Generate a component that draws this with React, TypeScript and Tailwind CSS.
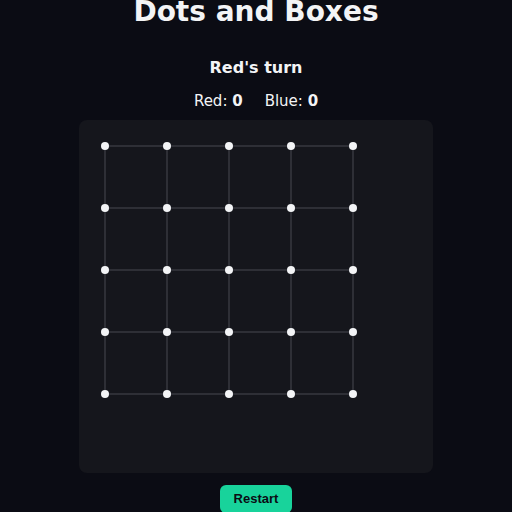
const SIZE = 5;
const GAP = 62;
const OFFSET = 26;

export default function App() {
  const dots = [];
  const lines = [];
  for (let r = 0; r < SIZE; r++) {
    for (let c = 0; c < SIZE; c++) {
      const x = OFFSET + c * GAP;
      const y = OFFSET + r * GAP;
      if (c < SIZE - 1) {
        lines.push(<line key={`h-${r}-${c}`} x1={x} y1={y} x2={x + GAP} y2={y} stroke="#2e2f36" strokeWidth={2} />);
      }
      if (r < SIZE - 1) {
        lines.push(<line key={`v-${r}-${c}`} x1={x} y1={y} x2={x} y2={y + GAP} stroke="#2e2f36" strokeWidth={2} />);
      }
      dots.push(<circle key={`d-${r}-${c}`} cx={x} cy={y} r={4} fill="#f3f4f6" />);
    }
  }

  return (
    <div className="min-h-screen bg-[#0b0c14] text-[#f3f4f6] flex flex-col items-center overflow-hidden font-['DejaVu_Sans',sans-serif]">
      <h1 className="text-[28px] font-bold leading-none -mt-[2px]">Dots and Boxes</h1>
      <div className="mt-[32px] text-[16px] font-bold leading-5">Red's turn</div>
      <div className="mt-[13px] flex gap-[22px] text-[15px] leading-5">
        <span>Red: <b>0</b></span>
        <span>Blue: <b>0</b></span>
      </div>
      <div className="mt-[9px] w-[354px] h-[353px] bg-[#15161c] rounded-lg">
        <svg width={354} height={353}>
          {lines}
          {dots}
        </svg>
      </div>
      <button className="mt-[12px] w-[72px] h-[28px] rounded-md bg-[#18d39b] text-[#0b0c14] text-[13px] font-bold font-['Liberation_Sans',sans-serif]">
        Restart
      </button>
    </div>
  );
}
